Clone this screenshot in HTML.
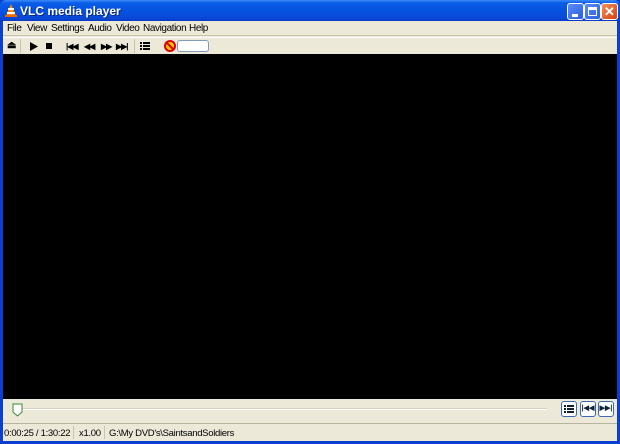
<!DOCTYPE html>
<html><head><meta charset="utf-8"><style>
*{margin:0;padding:0;box-sizing:border-box}
body{width:620px;height:444px;overflow:hidden;background:#0a3fd0;font-family:"Liberation Sans",Tahoma,sans-serif;font-size:11px;position:relative}
.title{position:absolute;left:0;top:0;width:620px;height:22px;background:linear-gradient(#3d8bf8 0,#0a5ce6 3px,#0554e0 10px,#0a48d8 18px,#0838b8 22px);border-radius:6px 6px 0 0}
.title span{position:absolute;left:20px;top:4px;color:#fff;font-weight:bold;font-size:12px;text-shadow:1px 1px #0a2a80}
.tb{position:absolute;top:3px;width:17px;height:17px;border:1px solid #fff;border-radius:3px;background:linear-gradient(135deg,#5a8ef8,#2a5ee0)}
.inner{position:absolute;left:3px;top:21px;width:614px;height:420px;background:#ece9d8}
.menu{position:absolute;left:0;top:0;height:15px;width:614px;border-bottom:1px solid #c8c4b0}
.menu span{position:absolute;top:2px;font-size:10px;letter-spacing:-0.4px;color:#000}
.tool{position:absolute;left:0;top:16px;height:17px;width:614px;border-top:1px solid #fff}
.ic{position:absolute;top:4px;font-size:8px;color:#000;font-weight:bold;letter-spacing:-1px}
.video{position:absolute;left:0;top:33px;width:614px;height:345px;background:#000}
.seek{position:absolute;left:0;top:378px;width:614px;height:24px}
.status{position:absolute;left:0;top:402px;width:614px;height:18px;border-top:1px solid #b8b4a0}
.status span{position:absolute;top:4px;font-size:9.5px;letter-spacing:-0.3px}
.btn{position:absolute;top:380px;width:16px;height:16px;border:1px solid #3c6ab0;border-radius:3px;background:#fff;font-size:7px;text-align:center;line-height:14px;font-weight:bold;color:#123}
</style></head><body>
<div class="title">
<svg style="position:absolute;left:4px;top:3px" width="14" height="15"><polygon points="7,1 12,13 2,13" fill="#f80"/><rect x="4" y="5" width="6" height="2" fill="#fff"/><rect x="3" y="9" width="8" height="2" fill="#fff"/><rect x="1" y="12" width="12" height="2" fill="#e60"/></svg>
<span>VLC media player</span>
<div class="tb" style="left:567px"><div style="position:absolute;left:4px;top:10px;width:6px;height:3px;background:#fff"></div></div>
<div class="tb" style="left:584px"><div style="position:absolute;left:3px;top:3px;width:9px;height:9px;border:1px solid #fff;border-top-width:3px"></div></div>
<div class="tb" style="left:601px;background:linear-gradient(135deg,#f0905a,#d84010);color:#fff;font-weight:bold;font-size:13px;text-align:center;line-height:15px">✕</div>
</div>
<div class="inner">
<div class="menu">
<span style="left:4px">File</span><span style="left:24px">View</span><span style="left:48px">Settings</span><span style="left:85px">Audio</span><span style="left:113px">Video</span><span style="left:140px">Navigation</span><span style="left:186px">Help</span>
</div>
<div class="tool">
<span class="ic" style="left:4px;top:2px;font-size:10px">⏏</span>
<div style="position:absolute;left:17px;top:1px;width:1px;height:14px;background:#c8c4b0"></div>
<svg style="position:absolute;left:27px;top:4px" width="8" height="9"><polygon points="0,0 8,4.5 0,9" fill="#000"/></svg>
<div style="position:absolute;left:43px;top:5px;width:6px;height:6px;background:#000"></div>
<span class="ic" style="left:63px">|◀◀</span><span class="ic" style="left:81px">◀◀</span><span class="ic" style="left:98px">▶▶</span><span class="ic" style="left:113px">▶▶|</span>
<div style="position:absolute;left:131px;top:1px;width:1px;height:14px;background:#c8c4b0"></div>
<svg style="position:absolute;left:137px;top:4px" width="10" height="8"><g fill="#000"><rect x="0" y="0" width="2" height="2"/><rect x="3" y="0" width="7" height="2"/><rect x="0" y="3" width="2" height="2"/><rect x="3" y="3" width="7" height="2"/><rect x="0" y="6" width="2" height="2"/><rect x="3" y="6" width="7" height="2"/></g></svg>
<svg style="position:absolute;left:161px;top:2px" width="12" height="12"><circle cx="6" cy="6" r="5" fill="#fc0" stroke="#d00" stroke-width="2"/><line x1="2" y1="2" x2="10" y2="10" stroke="#d00" stroke-width="2"/></svg>
<div style="position:absolute;left:174px;top:2px;width:32px;height:12px;background:#fff;border:1px solid #7f9db9;border-radius:3px"></div>
</div>
<div class="video"></div>
<div class="seek">
<div style="position:absolute;left:14px;top:9px;width:530px;height:2px;background:#d6d2c2;border-bottom:1px solid #fff"></div>
<svg style="position:absolute;left:9px;top:4px" width="11" height="14"><path d="M1,1 H10 V9 L5.5,13 L1,9 Z" fill="#fff" stroke="#3a8a3a"/></svg>
</div>
<div class="btn" style="left:558px"><svg width="10" height="8" style="margin-top:3px"><g fill="#123"><rect x="0" y="0" width="2" height="2"/><rect x="3" y="0" width="7" height="2"/><rect x="0" y="3" width="2" height="2"/><rect x="3" y="3" width="7" height="2"/><rect x="0" y="6" width="2" height="2"/><rect x="3" y="6" width="7" height="2"/></g></svg></div>
<div class="btn" style="left:577px">|◀◀</div>
<div class="btn" style="left:595px">▶▶|</div>
<div class="status">
<span style="left:1px">0:00:25 / 1:30:22</span>
<div style="position:absolute;left:70px;top:2px;width:1px;height:13px;background:#c8c4b0"></div>
<span style="left:76px">x1.00</span>
<div style="position:absolute;left:101px;top:2px;width:1px;height:13px;background:#c8c4b0"></div>
<span style="left:106px">G:\My DVD's\SaintsandSoldiers</span>
</div>
</div>
</body></html>
